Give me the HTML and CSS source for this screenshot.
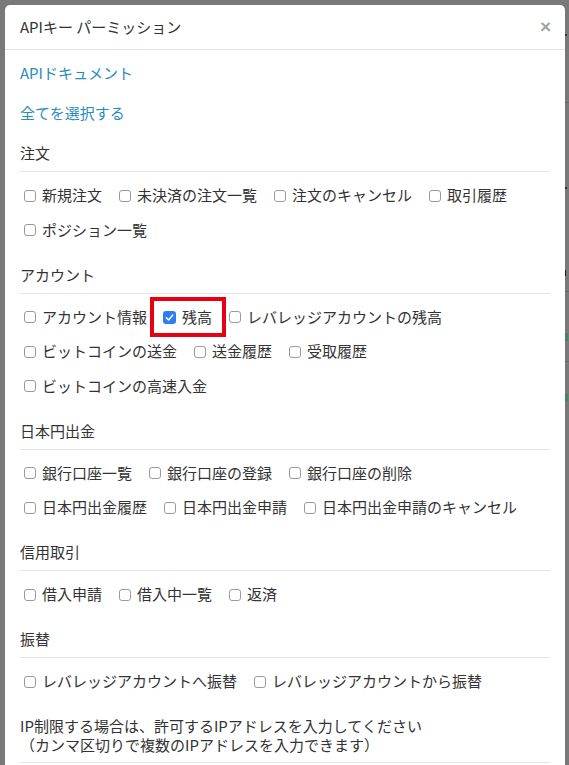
FILE: index.html
```html
<!DOCTYPE html>
<html lang="ja">
<head>
<meta charset="utf-8">
<title>APIキー パーミッション</title>
<link rel="stylesheet" href="styles.css">
</head>
<body>
<div class="page-behind" aria-hidden="true">
  <span class="pb-dot pb-a"></span>
  <span class="pb-line pb-b"></span>
  <span class="pb-dot pb-c"></span>
  <span class="pb-chev pb-d"></span>
  <span class="pb-line pb-e"></span>
  <span class="pb-green pb-f"></span>
  <span class="pb-line pb-g"></span>
  <span class="pb-green pb-h"></span>
</div>
<div class="modal">
  <div class="modal-header">
    <h4 class="modal-title">APIキー パーミッション</h4>
    <button class="close" type="button">×</button>
  </div>
  <div class="modal-body">
    <p class="link-line"><a href="#">APIドキュメント</a></p>
    <p class="link-line"><a href="#">全てを選択する</a></p>

    <section class="group">
      <h5 class="group-title">注文</h5>
      <div class="options">
        <label class="opt"><span class="cb"></span>新規注文</label>
        <label class="opt"><span class="cb"></span>未決済の注文一覧</label>
        <label class="opt"><span class="cb"></span>注文のキャンセル</label>
        <label class="opt"><span class="cb"></span>取引履歴</label>
        <label class="opt"><span class="cb"></span>ポジション一覧</label>
      </div>
    </section>

    <section class="group">
      <h5 class="group-title">アカウント</h5>
      <div class="options">
        <label class="opt"><span class="cb"></span>アカウント情報</label>
        <label class="opt highlighted"><span class="cb checked"><svg viewBox="0 0 13 13" width="13" height="13"><path d="M3.4 6.8 L5.6 9 L9.6 4.2" fill="none" stroke="#fff" stroke-width="1.6" stroke-linecap="round" stroke-linejoin="round"/></svg></span>残高</label>
        <label class="opt"><span class="cb"></span>レバレッジアカウントの残高</label>
        <label class="opt"><span class="cb"></span>ビットコインの送金</label>
        <label class="opt"><span class="cb"></span>送金履歴</label>
        <label class="opt"><span class="cb"></span>受取履歴</label>
        <label class="opt"><span class="cb"></span>ビットコインの高速入金</label>
      </div>
    </section>

    <section class="group">
      <h5 class="group-title">日本円出金</h5>
      <div class="options">
        <label class="opt"><span class="cb"></span>銀行口座一覧</label>
        <label class="opt"><span class="cb"></span>銀行口座の登録</label>
        <label class="opt"><span class="cb"></span>銀行口座の削除</label>
        <label class="opt"><span class="cb"></span>日本円出金履歴</label>
        <label class="opt"><span class="cb"></span>日本円出金申請</label>
        <label class="opt"><span class="cb"></span>日本円出金申請のキャンセル</label>
      </div>
    </section>

    <section class="group">
      <h5 class="group-title">信用取引</h5>
      <div class="options">
        <label class="opt"><span class="cb"></span>借入申請</label>
        <label class="opt"><span class="cb"></span>借入中一覧</label>
        <label class="opt"><span class="cb"></span>返済</label>
      </div>
    </section>

    <section class="group">
      <h5 class="group-title">振替</h5>
      <div class="options">
        <label class="opt"><span class="cb"></span>レバレッジアカウントへ振替</label>
        <label class="opt"><span class="cb"></span>レバレッジアカウントから振替</label>
      </div>
    </section>

    <p class="ip-note">IP制限する場合は、許可するIPアドレスを入力してください<br>（カンマ区切りで複数のIPアドレスを入力できます）</p>
  </div>
</div>
</body>
</html>
```

FILE: styles.css
```css
html, body {
  margin: 0;
  padding: 0;
  width: 569px;
  height: 765px;
  overflow: hidden;
}

body {
  background: #797979;
  font-family: "Noto Sans CJK JP", "Noto Sans", sans-serif;
  font-size: 15px;
  line-height: 20px;
  color: #333;
  position: relative;
}

/* page content visible behind the overlay, at the right edge */
.page-behind {
  position: absolute;
  left: 565px;
  top: 0;
  width: 4px;
  height: 765px;
}
.page-behind span { position: absolute; left: 0; }
.pb-line { width: 4px; height: 1px; background: #6a6a6a; }
.pb-dot { width: 2px; height: 2px; background: #333; }
.pb-chev { width: 3px; height: 6px; border-left: 1px solid #222; }
.pb-green { width: 3px; height: 8px; background: #3d8a5e; }
.pb-a { top: 34px; }
.pb-b { top: 102px; }
.pb-c { top: 187px; }
.pb-d { top: 270px; }
.pb-e { top: 291px; }
.pb-f { top: 333px; }
.pb-g { top: 361px; }
.pb-h { top: 394px; }

.modal {
  position: relative;
  margin: 5px 0 0 5px;
  width: 560px;
  height: 800px;
  background: #fff;
  border-radius: 5px 5px 0 0;
}

.modal-header {
  display: flex;
  align-items: center;
  justify-content: space-between;
  padding: 12px 15px 12px 15px;
  height: 20px;
  border-bottom: 1px solid #e5e5e5;
}

.modal-title {
  margin: 0;
  font-size: 15px;
  font-weight: 400;
  line-height: 20px;
  color: #333;
}

.close {
  border: 0;
  background: none;
  padding: 0;
  margin-right: -1px;
  font-family: "Liberation Sans", sans-serif;
  font-size: 19px;
  font-weight: 700;
  line-height: 20px;
  color: #a3a3a3;
  cursor: pointer;
}

.modal-body {
  padding: 13px 15px 0 15px;
}

.link-line {
  margin: 0 0 20px 0;
}

a {
  color: #2a8bbd;
  text-decoration: none;
}

.group {
  margin-top: 25px;
}
.link-line + .group { margin-top: 2px; }

.group-title {
  margin: 0;
  font-size: 15px;
  font-weight: 400;
  line-height: 20px;
  padding-bottom: 8px;
  border-bottom: 1px solid #e5e5e5;
  color: #333;
}

.options {
  display: flex;
  flex-wrap: wrap;
  column-gap: 13px;
  row-gap: 14.5px;
  margin-top: 13px;
}

.opt {
  position: relative;
  display: inline-flex;
  align-items: center;
  height: 20px;
  white-space: nowrap;
  cursor: pointer;
}

.cb {
  box-sizing: border-box;
  display: inline-flex;
  align-items: center;
  justify-content: center;
  width: 12px;
  height: 12px;
  margin: 1px 6px 0 4px;
  border: 1px solid #9a9a9a;
  border-radius: 3px;
  background: #fff;
}

.cb.checked {
  width: 13px;
  height: 13px;
  margin: 1px 6px 0 3px;
  border: 0;
  background: #2f7cf3;
}

.highlighted::after {
  content: "";
  position: absolute;
  left: -10px;
  top: -10px;
  right: -14px;
  bottom: -10px;
  border: 4px solid #e60012;
  pointer-events: none;
}

.ip-note {
  margin: 25px 0 0 0;
  line-height: 19px;
  padding-bottom: 8px;
  border-bottom: 1px solid #e5e5e5;
}
```
